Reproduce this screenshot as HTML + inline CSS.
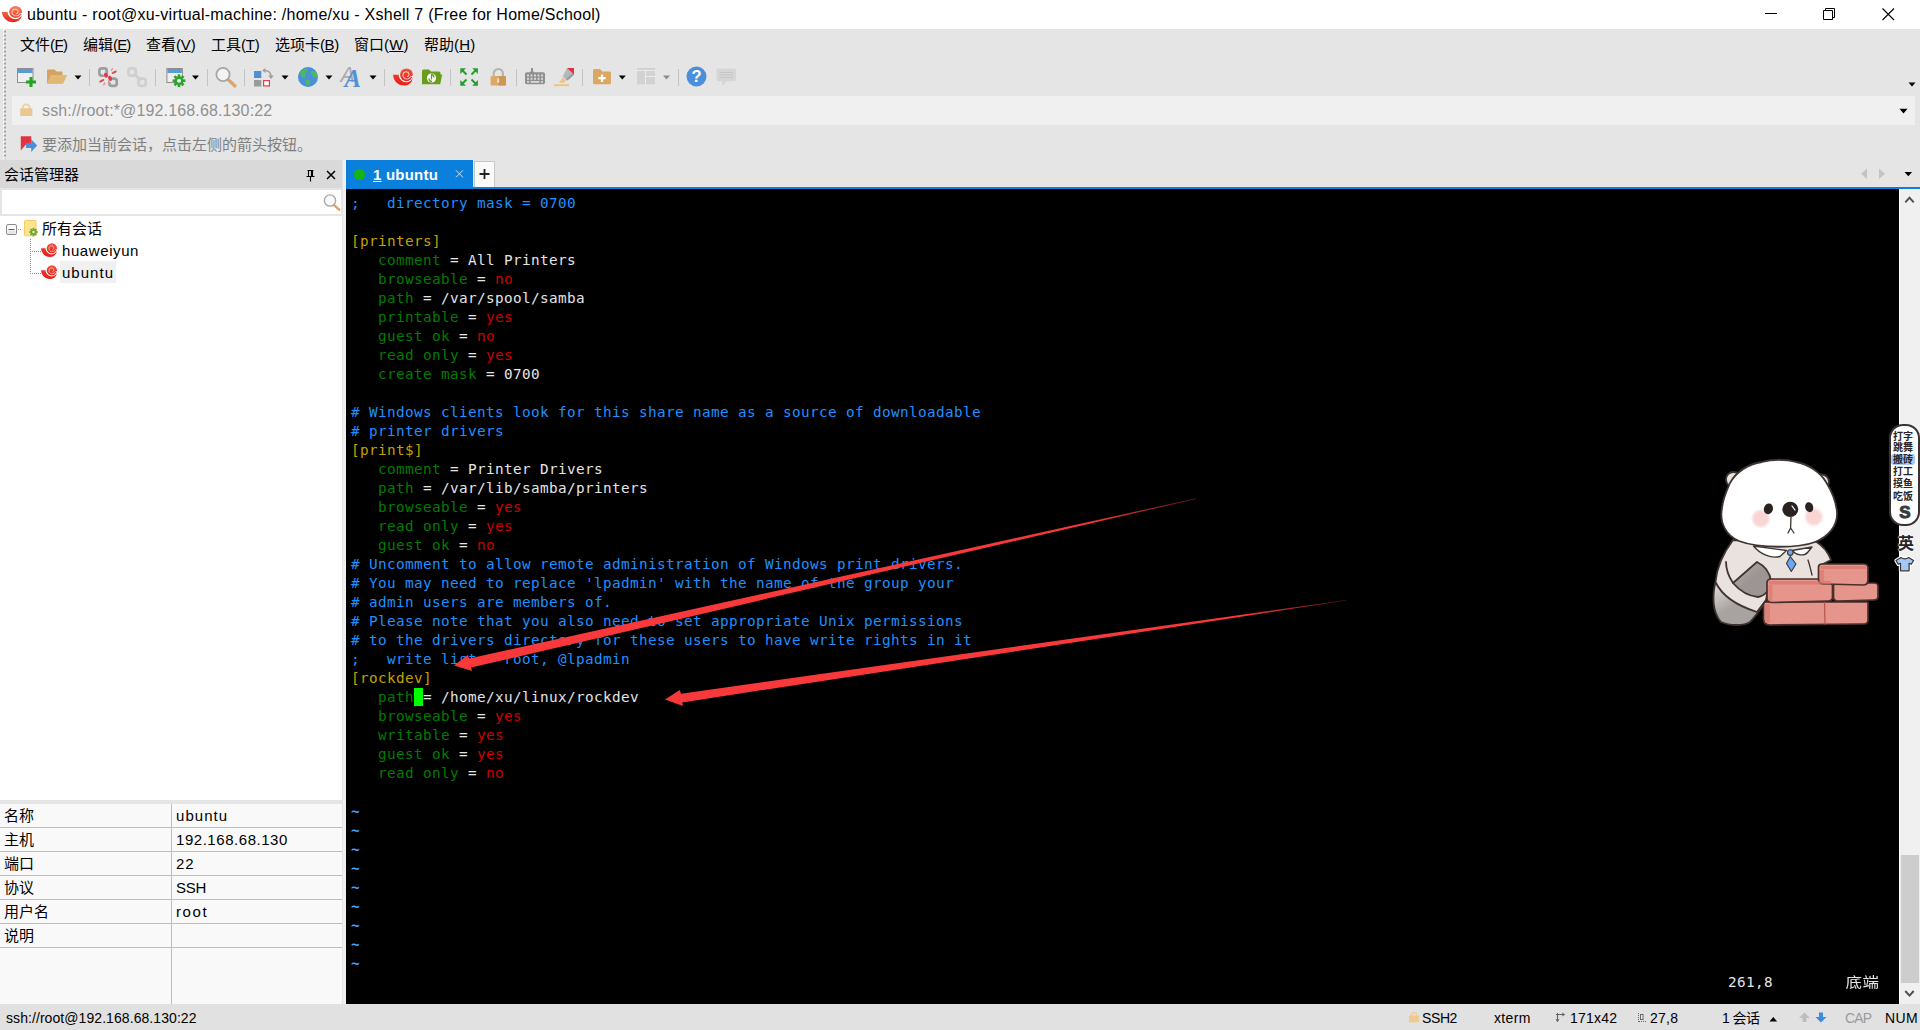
<!DOCTYPE html>
<html lang="zh-CN">
<head>
<meta charset="utf-8">
<title>ubuntu - root@xu-virtual-machine: /home/xu - Xshell 7 (Free for Home/School)</title>
<style>
*{box-sizing:border-box;margin:0;padding:0}
html,body{width:1920px;height:1030px;overflow:hidden;background:#e5e5e5}
body{position:relative;font-family:"Liberation Sans","Noto Sans CJK SC",sans-serif;color:#000;font-size:15px}
.abs{position:absolute}
#titlebar{left:0;top:0;width:1920px;height:29px;background:#fff}
#title{left:27px;top:1px;height:29px;line-height:28px;font-size:16px;white-space:nowrap;color:#000}
.menu{top:33px;height:24px;line-height:24px;font-size:15px;white-space:nowrap}
#addr{left:12px;top:96px;width:1903px;height:29px;background:#f0f0f0}
#addrtxt{left:42px;top:97px;height:28px;line-height:28px;font-size:16px;color:#919191;white-space:nowrap}
#hint{left:42px;top:132px;height:26px;line-height:26px;font-size:15px;color:#808080;white-space:nowrap}
#lp-head{left:0;top:160px;width:342px;height:28px;background:#d9d9d9}
#lp-title{left:4px;top:161px;height:28px;line-height:28px;font-size:15px;white-space:nowrap}
#lp-search{left:2px;top:190px;width:339px;height:24px;background:#fff}
#lp-tree{left:0;top:216px;width:342px;height:584px;background:#fff}
#lp-split{left:0;top:800px;width:342px;height:4px;background:#e5e5e5}
#props{left:0;top:804px;width:342px;height:200px;background:#f9f9f9}
.prow{left:0;width:342px;height:1px;background:#bdbdbd}
.pk,.pv{height:24px;line-height:23px;font-size:15px;white-space:nowrap}
.tr{height:22px;line-height:22px;font-size:15px;white-space:nowrap}
.pk{left:4px}.pv{left:176px}
#tab{left:346px;top:160px;width:127px;height:28px;background:#0a7fdc}
#tabline{left:346px;top:187px;width:1574px;height:2px;background:#0a7fdc}
#plus{left:474px;top:161px;width:21px;height:26px;background:#fafafa;border:1px solid #c8c8c8;border-bottom:none}
#term{left:346px;top:189px;width:1553px;height:815px;background:#000}
#sb{left:1899px;top:189px;width:21px;height:815px;background:#f0f0f0}
#status{left:0;top:1004px;width:1920px;height:26px;background:#e1e1e1}
.st{top:1006px;height:25px;line-height:25px;font-size:14px;white-space:nowrap}
pre#tt{left:351px;top:194px;font-family:"DejaVu Sans Mono","Liberation Mono","Noto Sans CJK SC",monospace;font-size:14.3px;letter-spacing:.391px;line-height:19px;color:#e5e5e5;white-space:pre}
.tl{font-family:"DejaVu Sans Mono","Liberation Mono","Noto Sans CJK SC",monospace;font-size:14.3px;letter-spacing:.391px;line-height:19px;color:#e5e5e5;white-space:pre}
.pt{left:1890px;width:26px;height:12px;line-height:12px;font-size:10px;font-weight:bold;color:#2a2424;text-align:center;white-space:nowrap;letter-spacing:0}
.b{color:#1e90ff}.t{color:#40a8ff;font-weight:bold}.y{color:#c4a000}.g{color:#007c00}.r{color:#cc0000}
/*FIT*/
#title{letter-spacing:0.244px}
#m0 .l{letter-spacing:-0.557px}
#m1 .l{letter-spacing:-0.839px}
#m2 .l{letter-spacing:-0.172px}
#m3 .l{letter-spacing:-0.224px}
#m4 .l{letter-spacing:-0.439px}
#m5 .l{letter-spacing:0.176px}
#m6 .l{letter-spacing:0.219px}
#addrtxt{letter-spacing:0.137px}
#t1{letter-spacing:0.587px}
#t2{letter-spacing:1.018px}
#v0{letter-spacing:1.052px}
#v1{letter-spacing:0.544px}
#v2{letter-spacing:0.856px}
#v3{letter-spacing:-0.248px}
#v4{letter-spacing:1.610px}
#s0{letter-spacing:0.072px}
#s1{letter-spacing:-0.395px}
#s2{letter-spacing:0.340px}
#s3{letter-spacing:0.244px}
#s4{letter-spacing:0.238px}
#s5{letter-spacing:-0.597px}
#s6{letter-spacing:-0.832px}
#s7{letter-spacing:0.436px}
#tabtxt{letter-spacing:0.209px}
/*ENDFIT*/
</style>
</head>
<body>
<div id="titlebar" class="abs"></div>
<div id="title" class="abs">ubuntu - root@xu-virtual-machine: /home/xu - Xshell 7 (Free for Home/School)</div>

<div class="abs menu" id="m0" style="left:20px">文件<span class="l">(<u>F</u>)</span></div>
<div class="abs menu" id="m1" style="left:83px">编辑<span class="l">(<u>E</u>)</span></div>
<div class="abs menu" id="m2" style="left:146px">查看<span class="l">(<u>V</u>)</span></div>
<div class="abs menu" id="m3" style="left:211px">工具<span class="l">(<u>T</u>)</span></div>
<div class="abs menu" id="m4" style="left:275px">选项卡<span class="l">(<u>B</u>)</span></div>
<div class="abs menu" id="m5" style="left:354px">窗口<span class="l">(<u>W</u>)</span></div>
<div class="abs menu" id="m6" style="left:424px">帮助<span class="l">(<u>H</u>)</span></div>

<div id="addr" class="abs"></div>
<div id="addrtxt" class="abs">ssh://root:*@192.168.68.130:22</div>
<div id="hint" class="abs">要添加当前会话，点击左侧的箭头按钮。</div>


<svg class="abs" style="left:0;top:0" width="1920" height="160" viewBox="0 0 1920 160">
<defs>
<linearGradient id="xg" gradientUnits="userSpaceOnUse" x1="0" y1="0" x2="0" y2="14.2"><stop offset="0" stop-color="#f2583e"/><stop offset=".6" stop-color="#ec2a20"/><stop offset="1" stop-color="#e8201c"/></linearGradient>
<linearGradient id="xg2" gradientUnits="userSpaceOnUse" x1="0" y1="0" x2="0" y2="14.2"><stop offset="0" stop-color="#f4805e"/><stop offset=".5" stop-color="#ef5a3e"/><stop offset="1" stop-color="#e8221c"/></linearGradient>
<g id="xs">
<path d="M0,5.5 L4.5,5.5 C4.7,9 7.5,11.5 10.9,11.5 C13.2,11.5 15,10.1 15.6,7.9 C16,11.4 12.7,14.2 9,14.2 C4,14.2 .4,10.5 0,5.5 Z" style="fill:var(--xf,url(#xg))"/>
<circle cx="10.85" cy="5.5" r="5.15" style="fill:var(--xf,url(#xg))"/>
<path d="M5.25,5.6 C5.4,8.9 7.9,11.1 10.9,11.1 C13,11.1 14.7,9.9 15.4,8" fill="none" stroke="#fff" stroke-width=".6" opacity=".85"/>
<path d="M14.16,7.04 L13.75,7.62 L13.25,8.10 L12.68,8.46 L12.05,8.70 L11.40,8.82 L10.75,8.81 L10.13,8.67 L9.56,8.42 L9.05,8.07 L8.63,7.64 L8.31,7.14 L8.09,6.60 L7.99,6.03 L8.00,5.47 L8.11,4.93 L8.32,4.44 L8.62,4.00 L8.99,3.64 L9.42,3.37 L9.88,3.18 L10.35,3.10 L10.83,3.10 L11.28,3.20 L11.69,3.38 L12.06,3.63 L12.35,3.94 L12.58,4.29 L12.73,4.67 L12.80,5.06 L12.79,5.44 L12.71,5.81 L12.56,6.14 L12.36,6.43 L12.11,6.66 L11.83,6.84 L11.53,6.95" fill="none" stroke="#fff" stroke-width=".85" opacity=".7" stroke-linecap="round"/>
<path d="M16.3,5.9 L14.2,6.9 L16.2,7.6 Z" fill="#fff" opacity=".9"/>
</g>
</defs>
<!-- title icon -->
<use href="#xs" style="--xf:url(#xg2)" transform="translate(1.9,5.5) scale(1.26,1.176)"/>
<!-- window controls -->
<path d="M1765,13.5 h12" stroke="#000" stroke-width="1" fill="none"/>
<path d="M1823.5,10.5 h9 v9 h-9 z M1825.5,10.5 v-2 h9 v9 h-2" stroke="#000" stroke-width="1" fill="none"/>
<path d="M1882.5,8.5 l11.5,11.5 M1894,8.5 l-11.5,11.5" stroke="#000" stroke-width="1.1" fill="none"/>
<!-- grip -->
<path d="M4,29.500 V159" stroke="#fdfdfd" stroke-width="2" stroke-dasharray="2 2" fill="none"/>
<path d="M5,30.500 V159" stroke="#a3a3a3" stroke-width="2" stroke-dasharray="2 2" fill="none"/>
<rect x="89.0" y="69" width="1" height="17" fill="#c3c3c3"/><rect x="155.0" y="69" width="1" height="17" fill="#c3c3c3"/><rect x="207.0" y="69" width="1" height="17" fill="#c3c3c3"/><rect x="244.0" y="69" width="1" height="17" fill="#c3c3c3"/><rect x="384.0" y="69" width="1" height="17" fill="#c3c3c3"/><rect x="450.0" y="69" width="1" height="17" fill="#c3c3c3"/><rect x="516.0" y="69" width="1" height="17" fill="#c3c3c3"/><rect x="582.0" y="69" width="1" height="17" fill="#c3c3c3"/><rect x="678.0" y="69" width="1" height="17" fill="#c3c3c3"/>
<!-- 1 new session -->
<rect x="17.5" y="68.5" width="15.5" height="14" fill="#efefef" stroke="#8e8e8e"/>
<rect x="18" y="69" width="14.5" height="4" fill="#5b9bd5"/>
<rect x="26" y="80.5" width="10" height="3" fill="#1fa51f"/><rect x="29.5" y="77" width="3" height="10" fill="#1fa51f"/>
<!-- 2 open folder -->
<path d="M47,70.5 q0,-1 1,-1 h6.5 l2,2 h5 q1,0 1,1 v11 h-15.5 z" fill="#d3a35f"/>
<path d="M50.8,75 H67.3 L63.2,83.6 H47 Z" fill="#e2b877"/>
<path d="M74.5,75.5 h7 l-3.5,4 z" fill="#000"/>
<!-- 5 disconnect -->
<g fill="none" stroke="#9b9ea1" stroke-width="2.7">
<rect x="99.4" y="68.4" width="7.3" height="7.3" rx="2.4"/>
<rect x="109.4" y="78.6" width="7.3" height="7.3" rx="2.4"/>
</g>
<path d="M104,73 l5,5 M108,77.5 l4,4" stroke="#e5e5e5" stroke-width="3.2"/>
<g fill="#e63946">
<ellipse cx="106" cy="75.1" rx="1.9" ry="2.7" transform="rotate(-25 106 75.1)"/>
<ellipse cx="110.1" cy="78.3" rx="1.9" ry="2.7" transform="rotate(-25 110.1 78.3)"/>
<ellipse cx="114.3" cy="72.3" rx="2.9" ry="1.1" transform="rotate(-28 114.3 72.3)" opacity=".9"/>
<ellipse cx="112" cy="69.5" rx="1.7" ry=".7" transform="rotate(-60 112 69.5)" opacity=".55"/>
<ellipse cx="101.8" cy="80.8" rx="2.9" ry="1.1" transform="rotate(-28 101.8 80.8)" opacity=".9"/>
<ellipse cx="104.3" cy="83.9" rx="1.7" ry=".7" transform="rotate(-60 104.3 83.9)" opacity=".55"/>
</g>
<!-- 6 chain disabled -->
<g fill="none" stroke="#cfcfcf" stroke-width="2.7">
<rect x="128.5" y="68.4" width="7.3" height="7.3" rx="2.4"/>
<rect x="138.5" y="78.6" width="7.3" height="7.3" rx="2.4"/>
<path d="M134,73.500 l7,7" stroke-width="3"/>
</g>
<!-- 8 session props -->
<rect x="166.9" y="68.5" width="15.5" height="14" fill="#efefef" stroke="#8e8e8e"/>
<rect x="167.4" y="69" width="14.5" height="4" fill="#5b9bd5"/>
<g transform="translate(179,80.7)" fill="#2aa52a"><circle r="4.4"/><g><rect x="-1.3" y="-6.4" width="2.6" height="12.8"/><rect x="-1.3" y="-6.4" width="2.6" height="12.8" transform="rotate(45)"/><rect x="-1.3" y="-6.4" width="2.6" height="12.8" transform="rotate(90)"/><rect x="-1.3" y="-6.4" width="2.6" height="12.8" transform="rotate(135)"/></g><circle r="2" fill="#efefef"/></g>
<path d="M192,75.5 h7 l-3.5,4 z" fill="#000"/>
<!-- 11 magnifier -->
<path d="M228,79.5 L235,86" stroke="#dca469" stroke-width="3.2" stroke-linecap="round"/>
<circle cx="223" cy="74.5" r="6.6" fill="#f4f4f4" stroke="#a6a6a6" stroke-width="1.8"/>
<!-- 14 color scheme -->
<rect x="254" y="71" width="7.3" height="7" fill="#4f8fd6"/>
<rect x="254" y="80" width="7.3" height="6.5" fill="#9a9a9a"/>
<rect x="263.6" y="80.6" width="5.8" height="5.3" fill="#fff" stroke="#e0404a" stroke-width="1.2"/>
<path d="M264,70.5 q6.5,-.5 7,6" fill="none" stroke="#a0a0a0" stroke-width="1.5"/>
<path d="M268,75.5 h6 l-3,3.6 z" fill="#a0a0a0"/><path d="M265.5,68 v5 l-3.4,-2.5 z" fill="#a0a0a0"/>
<path d="M281.5,75.5 h7 l-3.5,4 z" fill="#000"/>
<!-- 16 globe -->
<circle cx="308" cy="77" r="10" fill="#4a8fdc"/>
<path d="M301.5,70.5 q3,-2.5 6.5,-2 q-.5,3 -2.5,4.5 q1,3 -1.5,5 q-3,-1 -3.5,-4 q-.5,-2 1,-3.500 z" fill="#4cba5c"/>
<path d="M311,71 q3,-1 5.500,1.500 q1,2.500 .5,5 q-2.500,1 -4,-1 q-.5,-2 -2.500,-3 z" fill="#4cba5c"/>
<path d="M305.500,80 q2.500,-1 4.500,.5 q1,2 -1,4.500 q-2.500,.5 -3.500,-1.500 z" fill="#4cba5c"/>
<path d="M325.5,75.5 h7 l-3.5,4 z" fill="#000"/>
<!-- 18 font -->
<text x="340.5" y="82.4" font-family="Liberation Sans,sans-serif" font-style="italic" font-size="21.5" fill="#a9acae">A</text>
<text x="344.6" y="86.8" font-family="Liberation Serif,serif" font-style="italic" font-weight="bold" font-size="24.7" fill="#5590d5">A</text>
<path d="M369.5,75.5 h7 l-3.5,4 z" fill="#000"/>
<!-- 21 xshell -->
<use href="#xs" transform="translate(393,68) scale(1.242,1.24)"/>
<!-- 22 xftp folder -->
<path d="M422,71 q0,-1.500 1.500,-1.500 h5.500 l2,2 h8 q1.500,0 1.500,1.500 v1.500 h1.700 l-2,9.800 h-18.200 z" fill="#6b9d1c"/>
<circle cx="431.500" cy="78" r="4.600" fill="#fff"/>
<path d="M431.500,74.500 v5 M429,78.500 q0,3 3,3 M434,77.500 q0,-3 -3,-3" stroke="#6b9d1c" stroke-width="1.300" fill="none"/>
<!-- 24 fullscreen -->
<g fill="#1fa02c" stroke="#1fa02c" stroke-width="2">
<path d="M466.500,74.500 L462,70" /><path d="M460.300,68.300 h5.600 l-5.600,5.600 z" stroke="none"/>
<path d="M471.500,74.500 L476,70" /><path d="M477.900,68.300 h-5.600 l5.600,5.600 z" stroke="none"/>
<path d="M466.500,79.500 L462,84" /><path d="M460.300,85.700 h5.600 l-5.600,-5.600 z" stroke="none"/>
<path d="M471.500,79.500 L476,84" /><path d="M477.900,85.700 h-5.600 l5.600,-5.600 z" stroke="none"/>
</g>
<!-- 25 lock -->
<path d="M493.700,77 v-3.400 a4.600,4.600 0 0 1 9.200,0 v3.400" fill="none" stroke="#b4b4b4" stroke-width="2.200"/>
<rect x="490.600" y="76" width="15.400" height="9.400" rx="1.200" fill="#dea964"/>
<rect x="498.300" y="76" width="7.700" height="9.400" rx="1.200" fill="#cf9752"/>
<rect x="497.300" y="78.300" width="1.800" height="4.600" fill="#f3e3cc"/>
<!-- 27 keyboard -->
<path d="M532,68 v4.500" stroke="#8e9193" stroke-width="2"/><path d="M530,72.300 h4" stroke="#8e9193" stroke-width="1.400"/>
<rect x="525" y="72.300" width="20" height="12" rx="1.800" fill="#8f8f8f"/>
<g fill="#d8d8d8"><rect x="527" y="74.500" width="2" height="2"/><rect x="530.500" y="74.500" width="2" height="2"/><rect x="534" y="74.500" width="2" height="2"/><rect x="537.500" y="74.500" width="2" height="2"/><rect x="541" y="74.500" width="2" height="2"/><rect x="527" y="77.800" width="2" height="2"/><rect x="530.500" y="77.800" width="2" height="2"/><rect x="534" y="77.800" width="2" height="2"/><rect x="537.500" y="77.800" width="2" height="2"/><rect x="541" y="77.800" width="2" height="2"/><rect x="527" y="81" width="2" height="1.800"/><rect x="530.500" y="81" width="9" height="1.800"/><rect x="541" y="81" width="2" height="1.800"/></g>
<!-- 28 highlighter -->
<rect x="554" y="84.200" width="15" height="2" fill="#ebc58c"/>
<path d="M567,68 L574,74.800 L567.500,80.600 L562.700,76.600 Z" fill="#b4b8bb"/>
<path d="M574,74.800 L567.500,80.600 L565.800,79.200 L572.300,73.200 Z" fill="#9a9ea1"/>
<path d="M567,68 H574 V74.800 Z" fill="#e3303a"/>
<path d="M562.800,77.300 L566.200,80.200 L563.800,82.900 L559,82.700 Z" fill="#ebc58c"/>
<!-- 30 folder plus -->
<path d="M593,70.500 q0,-1.500 1.500,-1.500 h5.500 l2.500,2.500 h7 q1.500,0 1.500,1.500 v10 q0,1.300 -1.500,1.300 h-15 q-1.500,0 -1.500,-1.300 z" fill="#dba862"/>
<path d="M602,74.500 v7.400 M598.300,78.200 h7.400" stroke="#fff" stroke-width="2.200"/>
<path d="M618.8,75.5 h7 l-3.5,4 z" fill="#000"/>
<!-- 32 layout -->
<rect x="637" y="68" width="18" height="16.300" fill="#d2d2d2"/>
<path d="M645.500,70.500 v13.800 M645.500,76.500 h9.500 M637,70.500 h18" stroke="#ebebeb" stroke-width="1"/>
<path d="M663,75.5 h7 l-3.5,4 z" fill="#8c8c8c"/>
<!-- 35 help -->
<circle cx="696.500" cy="76.500" r="10" fill="#4a8fdc"/>
<text x="696.500" y="82.300" text-anchor="middle" font-family="Liberation Sans,sans-serif" font-weight="bold" font-size="16.500" fill="#fff">?</text>
<!-- 36 chat -->
<path d="M718.500,68.600 h15.500 q2,0 2,2 v8.600 q0,2 -2,2 h-7.500 l-4,5 v-5 h-4 q-2,0 -2,-2 v-8.600 q0,-2 2,-2 z" fill="#d6d6d6"/>
<path d="M719.500,72.500 h13.500 M719.500,75 h13.500 M719.500,77.500 h13.500" stroke="#c6c6c6" stroke-width="1"/>
<!-- toolbar overflow arrow -->
<path d="M1908.500,82.500 h7 l-3.500,4 z" fill="#000"/>
<!-- addr lock -->
<path d="M22.800,109 v-1.200 a3.400,3.400 0 0 1 6.800,0 v1.200" fill="none" stroke="#edd0a4" stroke-width="1.800"/>
<rect x="20.200" y="108.300" width="12.200" height="7.800" rx="1.200" fill="#ecc791"/>
<!-- addr dropdown -->
<path d="M1899.500,108.800 h8 l-4,4.600 z" fill="#000"/>
<!-- hint icon -->
<path d="M20.800,136.300 h10.400 v9 l-5,-1 l-5.400,6.200 z" fill="#e2343f"/>
<path d="M26,143.200 h5.200 v-4 l6,6.400 l-6,6.400 v-4 h-5.200 z" fill="#4a8fdc"/>
</svg>

<div id="lp-head" class="abs"></div>
<div id="lp-title" class="abs">会话管理器</div>
<div id="lp-search" class="abs"></div>
<div id="lp-tree" class="abs"></div>
<div id="lp-split" class="abs"></div>
<div id="props" class="abs"></div>

<!-- left panel details -->
<svg class="abs" style="left:0;top:160px" width="346" height="130" viewBox="0 160 346 130">
<!-- pin -->
<path d="M307.500,170.500 h6 M308.500,170.500 v5.500 M312.500,170.500 v5.500 M311.500,170.500 v5.500 M306.500,176.500 h8 M310.500,177 v4.500" stroke="#000" stroke-width="1.100" fill="none"/>
<!-- close -->
<path d="M327,171 l8,8 M335,171 l-8,8" stroke="#000" stroke-width="1.500" fill="none"/>
<!-- search magnifier -->
<path d="M334,205 L339.300,209.800" stroke="#dca469" stroke-width="2.400" stroke-linecap="round"/>
<circle cx="330" cy="200.500" r="5.600" fill="#fafafa" stroke="#a9a9a9" stroke-width="1.400"/>
<!-- tree expander -->
<rect x="6.500" y="224.500" width="10" height="10" rx="1.500" fill="#fbfbfb" stroke="#8c8c8c"/><rect x="7.500" y="230.500" width="8" height="3.500" fill="#e6e6e6"/>
<path d="M8.500,229.500 h6" stroke="#3a5fcd" stroke-width="1"/>
<path d="M18,229.500 h4" stroke="#8a8a8a" stroke-width="1" stroke-dasharray="1 1"/>
<path d="M30.500,239 v35" stroke="#8a8a8a" stroke-width="1" stroke-dasharray="1 1"/>
<path d="M32,251.500 h10" stroke="#8a8a8a" stroke-width="1" stroke-dasharray="1 1"/>
<path d="M32,273.500 h10" stroke="#8a8a8a" stroke-width="1" stroke-dasharray="1 1"/>
<!-- folder icon -->
<path d="M24.500,221.500 q0,-1 1,-1 h9.500 q1,0 1,1 v13.300 q0,1 -1,1 h-9.500 q-1,0 -1,-1 z" fill="#fde590" stroke="#f0c850" stroke-width=".9"/>
<g transform="translate(33.500,232)" fill="#6aa82e"><circle r="2.800"/><rect x="-.9" y="-4.200" width="1.800" height="8.400"/><rect x="-.9" y="-4.200" width="1.800" height="8.400" transform="rotate(45)"/><rect x="-.9" y="-4.200" width="1.800" height="8.400" transform="rotate(90)"/><rect x="-.9" y="-4.200" width="1.800" height="8.400" transform="rotate(135)"/><circle r="1.200" fill="#fdf3c8"/></g>
<!-- session icons -->
<use href="#xs" transform="translate(41,242.8)"/>
<use href="#xs" transform="translate(41,264.8)"/>
</svg>
<div class="abs" style="left:60px;top:261px;width:56px;height:22px;background:#f0f0f0"></div>
<div class="abs tr" style="left:42px;top:218px">所有会话</div>
<div class="abs tr" id="t1" style="left:62px;top:240px">huaweiyun</div>
<div class="abs tr" id="t2" style="left:62px;top:262px">ubuntu</div>
<div class="abs pk" style="top:804px">名称</div><div class="abs pv" id="v0" style="top:804px">ubuntu</div><div class="abs prow" style="top:827px"></div>
<div class="abs pk" style="top:828px">主机</div><div class="abs pv" id="v1" style="top:828px">192.168.68.130</div><div class="abs prow" style="top:851px"></div>
<div class="abs pk" style="top:852px">端口</div><div class="abs pv" id="v2" style="top:852px">22</div><div class="abs prow" style="top:875px"></div>
<div class="abs pk" style="top:876px">协议</div><div class="abs pv" id="v3" style="top:876px">SSH</div><div class="abs prow" style="top:899px"></div>
<div class="abs pk" style="top:900px">用户名</div><div class="abs pv" id="v4" style="top:900px">root</div><div class="abs prow" style="top:923px"></div>
<div class="abs pk" style="top:924px">说明</div><div class="abs prow" style="top:947px"></div>
<div class="abs" style="left:171px;top:804px;width:1px;height:200px;background:#bdbdbd"></div>


<div class="abs" style="left:343px;top:160px;width:3px;height:844px;background:#f0f0f0"></div>
<div id="tab" class="abs"></div>
<div id="tabline" class="abs"></div>
<div id="plus" class="abs"></div>

<div class="abs" style="left:354px;top:169px;width:11px;height:11px;border-radius:50%;background:#14b414"></div>
<div class="abs" id="tabtxt" style="left:373px;top:161px;height:28px;line-height:28px;font-size:15px;font-weight:bold;color:#fff;white-space:nowrap"><u>1</u> ubuntu</div>
<svg class="abs" style="left:346px;top:160px" width="1574" height="30" viewBox="346 160 1574 30">
<path d="M456,170.300 l7,7 M463,170.300 l-7,7" stroke="#cfe6fa" stroke-width="1" fill="none"/>
<path d="M479.500,174 h10 M484.500,169 v10" stroke="#222" stroke-width="1.800" fill="none"/>
<path d="M1867,168.500 v10.500 l-6,-5.250 z" fill="#c4c4c4"/>
<path d="M1879,168.500 v10.500 l6,-5.250 z" fill="#c4c4c4"/>
<path d="M1904.500,172 h7.600 l-3.800,4.300 z" fill="#000"/>
</svg>
<div id="term" class="abs"></div>
<div id="sb" class="abs"></div>

<div class="abs" style="left:1899px;top:189px;width:1px;height:815px;background:#fff"></div>
<div class="abs" style="left:1901px;top:855px;width:18px;height:128px;background:#cdcdcd"></div>
<svg class="abs" style="left:1898px;top:189px" width="22" height="814" viewBox="1898 189 22 814">
<path d="M1905.300,202.300 l4.200,-4.600 l4.200,4.600" stroke="#505050" stroke-width="2" fill="none"/>
<path d="M1905.300,991 l4.200,4.600 l4.200,-4.600" stroke="#505050" stroke-width="2" fill="none"/>
</svg>
<pre id="tt" class="abs"><span class="b">;   directory mask = 0700</span>

<span class="y">[printers]</span>
   <span class="g">comment</span> = All Printers
   <span class="g">browseable</span> = <span class="r">no</span>
   <span class="g">path</span> = /var/spool/samba
   <span class="g">printable</span> = <span class="r">yes</span>
   <span class="g">guest ok</span> = <span class="r">no</span>
   <span class="g">read only</span> = <span class="r">yes</span>
   <span class="g">create mask</span> = 0700

<span class="b"># Windows clients look for this share name as a source of downloadable</span>
<span class="b"># printer drivers</span>
<span class="y">[print$]</span>
   <span class="g">comment</span> = Printer Drivers
   <span class="g">path</span> = /var/lib/samba/printers
   <span class="g">browseable</span> = <span class="r">yes</span>
   <span class="g">read only</span> = <span class="r">yes</span>
   <span class="g">guest ok</span> = <span class="r">no</span>
<span class="b"># Uncomment to allow remote administration of Windows print drivers.</span>
<span class="b"># You may need to replace 'lpadmin' with the name of the group your</span>
<span class="b"># admin users are members of.</span>
<span class="b"># Please note that you also need to set appropriate Unix permissions</span>
<span class="b"># to the drivers directory for these users to have write rights in it</span>
<span class="b">;   write list = root, @lpadmin</span>
<span class="y">[rockdev]</span>
   <span class="g">path</span> = /home/xu/linux/rockdev
   <span class="g">browseable</span> = <span class="r">yes</span>
   <span class="g">writable</span> = <span class="r">yes</span>
   <span class="g">guest ok</span> = <span class="r">yes</span>
   <span class="g">read only</span> = <span class="r">no</span>

<span class="t">~</span>
<span class="t">~</span>
<span class="t">~</span>
<span class="t">~</span>
<span class="t">~</span>
<span class="t">~</span>
<span class="t">~</span>
<span class="t">~</span>
<span class="t">~</span>
</pre>

<svg class="abs" style="left:346px;top:189px" width="1552" height="814" viewBox="346 189 1552 814">
<defs><linearGradient id="a1" gradientUnits="userSpaceOnUse" x1="1090" y1="0" x2="1196" y2="0"><stop offset="0" stop-color="#f8383a"/><stop offset="1" stop-color="#5c1416"/></linearGradient><linearGradient id="a2" gradientUnits="userSpaceOnUse" x1="1240" y1="0" x2="1346" y2="0"><stop offset="0" stop-color="#f8383a"/><stop offset="1" stop-color="#5c1416"/></linearGradient></defs>
<path d="M454.100,665.500 L467.500,655 L469.200,658.500 L1196,498.300 L1196.200,498.900 L471.100,667.500 L472,670.900 Z" fill="url(#a1)"/>
<path d="M665.100,699.500 L679.700,689.900 L681.100,693.700 L1346,600 L1346.200,600.600 L682.300,702.400 L682.900,706.100 Z" fill="url(#a2)"/>
</svg>

<svg class="abs" style="left:1700px;top:440px" width="198" height="200" viewBox="1700 440 198 200">
<g stroke="#3e3431" stroke-width="1.800" stroke-linejoin="round" stroke-linecap="round">
<!-- leg / lower body gray -->
<path d="M1716,580 C1712,595 1712,612 1721,622 C1730,626 1744,626 1750,622 C1756,616 1760,610 1764,604 L1764,585 Z" fill="url(#lg)"/>
<!-- shirt body -->
<path d="M1733,540 C1724,552 1717,566 1715.500,582 C1722,596 1738,606 1757,612 L1766,600 L1770,580 L1819,580 L1819,566 L1831,560 C1828,552 1822,545 1815,541 Z" fill="#e9e2de"/>
<!-- arm -->
<defs><linearGradient id="ag" gradientUnits="userSpaceOnUse" x1="1740" y1="566" x2="1752" y2="580"><stop offset="0" stop-color="#e9e2de"/><stop offset=".55" stop-color="#a59d9c"/><stop offset="1" stop-color="#9d9594"/></linearGradient><linearGradient id="lg" gradientUnits="userSpaceOnUse" x1="1722" y1="585" x2="1734" y2="606"><stop offset="0" stop-color="#d9d3d0"/><stop offset="1" stop-color="#a8a2a1"/></linearGradient></defs><path d="M1757,562 C1765,566 1770,573 1771,581 C1770,590 1765,596 1758,597 C1748,596 1739,590 1733,583 Z" fill="url(#ag)"/>
<path d="M1726,562 C1726,570 1729,577 1733,583" fill="none"/>
<path d="M1808,560 C1810,566 1811,571 1812,575" fill="none" stroke-width="1.300"/>
<!-- collar -->
<path d="M1753.500,546 C1760,554 1771,559 1780,556.500 L1786.500,550.500 Z" fill="#fff" stroke-width="1.300"/>
<path d="M1792,550.500 C1796,555 1804,557 1808,552 L1812,547 Z" fill="#fff" stroke-width="1.300"/>
<!-- tie -->
<circle cx="1790.300" cy="552.600" r="2.800" fill="#6aa8f5" stroke-width="1.100"/>
<path d="M1790.300,556.500 L1796,564 L1791.300,571.500 L1786.500,563.500 Z" fill="#6aa8f5" stroke-width="1.100"/>
<!-- ears -->
<circle cx="1733.500" cy="479.500" r="7.500" fill="#e9e3df"/>
<circle cx="1821.500" cy="482" r="7.500" fill="#e9e3df"/>
<!-- head -->
<path d="M1739,541 C1727,536 1719,524 1722,508 C1723,498 1727,490 1730,483 C1736,472 1748,464 1762,462 C1772,459 1786,459 1796,462 C1808,464 1820,472 1826,482 C1831,490 1836,500 1837,512 C1838,526 1828,537 1815,542 C1800,548 1760,549 1739,541 Z" fill="#fff"/>
</g>
<!-- cheeks -->
<defs><filter id="bl" x="-30%" y="-30%" width="160%" height="160%"><feGaussianBlur stdDeviation="1.300"/></filter></defs><circle cx="1760.900" cy="518.500" r="8.600" fill="#fbd0d0" opacity=".9" filter="url(#bl)"/>
<circle cx="1813.800" cy="517" r="8.600" fill="#fbd0d0" opacity=".9" filter="url(#bl)"/>
<!-- eyes nose -->
<ellipse cx="1768.400" cy="508.800" rx="4.500" ry="5.400" fill="#2a2220" transform="rotate(15 1768.400 508.800)"/>
<ellipse cx="1809.200" cy="507.200" rx="4" ry="5" fill="#2a2220" transform="rotate(-15 1809.200 507.200)"/>
<ellipse cx="1790.300" cy="509.300" rx="8" ry="7.600" fill="#2a2220"/>
<path d="M1792,506 l3,4" stroke="#fff" stroke-width="1.200" stroke-linecap="round"/>
<path d="M1791,517 L1790.600,528 M1790.600,528 L1788,533 M1790.600,528 L1794,533" stroke="#3e3431" stroke-width="1.300" fill="none" stroke-linecap="round"/>
<!-- bricks -->
<g stroke="#4a2f2a" stroke-width="1.700" stroke-linejoin="round">
<path d="M1766,602 C1764,602 1763.500,603 1763.500,605 L1763.500,619 C1763.500,623 1766,625 1770,625 L1864,624 C1867,624 1868,622 1868,620 L1868,602 Z" fill="#e5958b"/>
<path d="M1824.500,602 L1825,624.500" fill="none" stroke-width="1.200" stroke="#b8554c"/>
<path d="M1771,579 C1768,579 1767,581 1767,583 L1767,598 C1767,601 1769,602.500 1772,602.500 L1828,601 C1831,601 1832.500,599 1832.500,597 L1832.500,579 Z" fill="#e5958b"/>
<path d="M1836,583.500 C1834,583.500 1833.500,585 1833.500,586 L1833.500,597 C1833.500,599.500 1835,601 1838,601 L1874,600 C1877,600 1878,598.500 1878,596.500 L1878,586 C1878,584 1876,583 1874,583 Z" fill="#e5958b"/>
<path d="M1822,564 C1819.500,564 1818.500,565.500 1818.500,567 L1818.500,579 C1818.500,582 1820.500,584 1824,584 L1863,585 C1866.500,585 1868,583 1868,580 L1868,568 C1868,565.500 1866,564 1863.500,564 Z" fill="#e5958b"/>
</g>
<path d="M1769,581 h62 v3.500 h-62 z" fill="#d9776d" opacity=".7"/>
<path d="M1821,566 h45 v3 h-45 z" fill="#d9776d" opacity=".7"/>
<path d="M1765,604 h5 v19 h-5 z M1768.500,585 h4 v16 h-4 z M1820,570 h4 v12 h-4 z" fill="#d9776d" opacity=".6"/>
</svg>

<div class="abs" style="left:1888.500px;top:424px;width:31px;height:102px;background:#fff;border:2px solid #3a3232;border-radius:14px"></div>
<div class="abs" style="left:1891px;top:453.500px;width:24px;height:11.500px;background:#a9c9f7;border-radius:3px"></div>
<div class="abs pt" style="top:431px">打字</div>
<div class="abs pt" style="top:442px">跳舞</div>
<div class="abs pt" style="top:454px">搬砖</div>
<div class="abs pt" style="top:466px">打工</div>
<div class="abs pt" style="top:478px">摸鱼</div>
<div class="abs pt" style="top:491px">吃饭</div>
<div class="abs" style="left:1896px;top:504px;width:18px;height:18px;line-height:18px;font-size:17px;font-weight:bold;color:#3a3a3a;text-align:center;-webkit-text-stroke:1px #3a3a3a">S</div>
<div class="abs" style="left:1897px;top:534px;width:18px;height:20px;line-height:20px;font-size:16px;font-weight:bold;color:#2a2424;text-align:center;text-shadow:0 0 1.500px #fff,0 0 1.500px #fff,0 0 2px #fff">英</div>
<svg class="abs" style="left:1892px;top:553px" width="26" height="22" viewBox="1892 553 26 22"><path id="shirt" d="M1901,557.500 q3.800,2.600 7.600,0 l5,3 l-2.300,3.800 l-2.200,-1 v7.500 h-8.600 v-7.500 l-2.200,1 l-2.300,-3.800 z" fill="#a6c8f7" stroke="#fff" stroke-width="3.400" stroke-linejoin="round"/><path d="M1901,557.500 q3.800,2.600 7.600,0 l5,3 l-2.300,3.800 l-2.200,-1 v7.500 h-8.600 v-7.500 l-2.200,1 l-2.300,-3.800 z" fill="#a6c8f7" stroke="#3a3232" stroke-width="1.200" stroke-linejoin="round"/></svg>
<div class="abs" style="left:414px;top:688px;width:9px;height:18px;background:#00ff00"></div>

<div class="abs tl" style="left:1728px;top:973px">261,8</div>
<div class="abs tl" style="left:1845.500px;top:973px;font-size:16.500px;letter-spacing:.500px;transform:scaleY(.86);transform-origin:0 55%">底端</div>
<div id="status" class="abs"></div>
<div class="abs st" id="s0" style="left:6px">ssh://root@192.168.68.130:22</div>

<svg class="abs" style="left:1400px;top:1004px" width="520" height="26" viewBox="1400 1004 520 26">
<path d="M1411.300,1016.500 v-1.200 a2.700,2.700 0 0 1 5.400,0 v1.200" fill="none" stroke="#f0cf9c" stroke-width="1.600"/>
<rect x="1409" y="1015.500" width="10" height="6.700" rx="1" fill="#f2c88e"/>
<path d="M1556,1014.500 H1564 M1557.500,1013 V1021" stroke="#666" stroke-width="1.200" fill="none"/><path d="M1562.300,1012.500 L1565.200,1014.500 L1562.300,1016.500 Z M1555.500,1019.300 L1557.500,1022.200 L1559.500,1019.300 Z" fill="#666"/>
<path d="M1638.500,1013 V1022 M1639,1021.500 H1647" stroke="#6a6a6a" stroke-width="1" stroke-dasharray="1 1" fill="none"/><rect x="1640.500" y="1014.500" width="2.500" height="5" fill="#ededed" stroke="#666" stroke-width="1"/>
<path d="M1769.500,1021.500 h7.600 l-3.800,-4.500 z" fill="#000"/>
<path d="M1804.500,1012.500 l5.500,5.500 h-3.500 v4 h-4 v-4 h-3.500 z" fill="#bdbdbd"/>
<path d="M1821,1022.500 l5.500,-5.500 h-3.500 v-4.500 h-4 v4.500 h-3.500 z" fill="#3d8be0"/>
</svg>
<div class="abs st" id="s1" style="left:1422px">SSH2</div>
<div class="abs st" id="s2" style="left:1494px">xterm</div>
<div class="abs st" id="s3" style="left:1570px">171x42</div>
<div class="abs st" id="s4" style="left:1650px">27,8</div>
<div class="abs st" id="s5" style="left:1722px">1 会话</div>
<div class="abs st" id="s6" style="left:1845px;color:#9a9a9a">CAP</div>
<div class="abs st" id="s7" style="left:1885px">NUM</div>
</body>
</html>
